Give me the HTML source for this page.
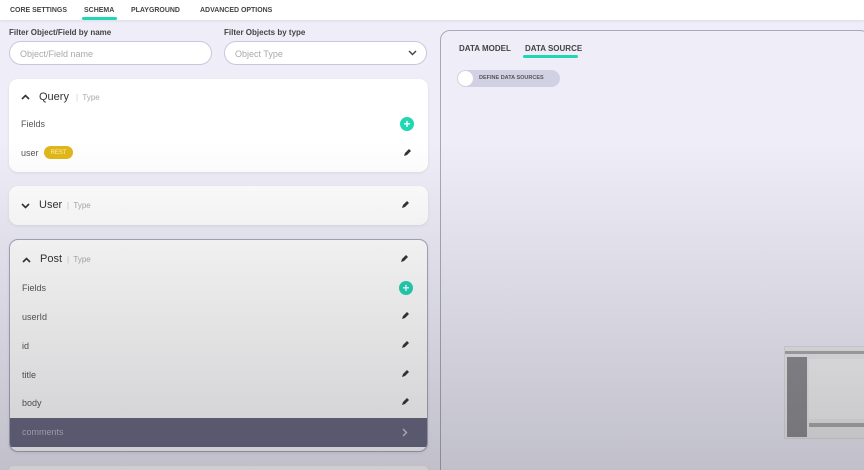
<!DOCTYPE html>
<html style="width:864px;height:470px;overflow:hidden"><head><style>
*{box-sizing:border-box;margin:0;padding:0}
html,body{width:864px;height:470px;overflow:hidden}
body{background:#efeef8;font-family:"Liberation Sans",sans-serif;position:relative;color:#444}
.nav{position:absolute;left:0;top:0;width:864px;height:20px;background:#fff;box-shadow:0 1px 3px rgba(0,0,0,.08)}
.nav span{position:absolute;top:5px;font-size:7.5px;font-weight:bold;color:#444;transform:scaleX(.93);transform-origin:left}
.lbl{position:absolute;font-size:8px;font-weight:bold;color:#444}
.inp{position:absolute;height:24px;border:1px solid #c9c7dd;border-radius:12px;background:#fff;font-size:9px;color:#aaa;padding:7px 10px}
.card{position:absolute;left:9px;width:419px;background:#fff;border-radius:9px;box-shadow:0 1px 3px rgba(0,0,0,.08)}
.t{position:absolute;font-size:9px;color:#555}
.h{position:absolute;font-size:11px;color:#333}
.ty{position:absolute;font-size:8px;color:#aaa}
.pen{position:absolute;width:8px;height:8px}
.plus{position:absolute;width:14px;height:14px;border-radius:50%;background:#1fd6b5;color:#fff;font-size:12px;font-weight:bold;text-align:center;line-height:14px}
.shade{position:absolute;left:0;top:0;width:864px;height:470px;background:linear-gradient(180deg,rgba(0,0,0,0) 0%,rgba(0,0,0,0) 30%,rgba(30,30,40,.22) 100%);pointer-events:none}
</style></head><body>
<div class="nav">
<span style="left:10px">CORE SETTINGS</span>
<span style="left:84px">SCHEMA</span>
<div style="position:absolute;left:82px;top:17px;width:35px;height:3px;background:#1fd6b5;border-radius:2px"></div>
<span style="left:131px">PLAYGROUND</span>
<span style="left:200px">ADVANCED OPTIONS</span>
</div>
<div class="lbl" style="left:9px;top:28px">Filter Object/Field by name</div>
<div class="lbl" style="left:224px;top:28px">Filter Objects by type</div>
<div class="inp" style="left:9px;top:41px;width:203px">Object/Field name</div>
<div class="inp" style="left:224px;top:41px;width:203px">Object Type<svg style="position:absolute;right:9px;top:8px" width="9" height="6" viewBox="0 0 9 6"><path d="M1 1l3.5 3.5L8 1" stroke="#444" stroke-width="1.4" fill="none"/></svg></div>

<div class="card" style="top:79px;height:93px">
<svg style="position:absolute;left:12px;top:15px" width="9" height="6" viewBox="0 0 9 6"><path d="M1 5l3.5-3.5L8 5" stroke="#333" stroke-width="1.6" fill="none"/></svg>
<div class="h" style="left:30px;top:12px">Query</div><div class="ty" style="left:67px;top:14px"><span style="color:#ccc">|</span>&nbsp; Type</div>
<div class="t" style="left:12px;top:40px">Fields</div><div class="plus" style="left:391px;top:38px">+</div>
<div class="t" style="left:12px;top:69px">user</div>
<div style="position:absolute;left:35px;top:67px;width:29px;height:13px;border-radius:7px;background:#e0b71a;color:#fff3b0;font-size:6px;display:flex;align-items:center;justify-content:center">REST</div>
<svg class="pen" style="left:394px;top:70px" viewBox="0 0 8 8"><path d="M1 7l1-3 4-4 2 2-4 4z" fill="#333"/></svg>
</div>

<div class="card" style="top:186px;height:39px">
<svg style="position:absolute;left:12px;top:17px" width="9" height="6" viewBox="0 0 9 6"><path d="M1 1l3.5 3.5L8 1" stroke="#333" stroke-width="1.6" fill="none"/></svg>
<div class="h" style="left:30px;top:13px">User</div><div class="ty" style="left:58px;top:15px"><span style="color:#ccc">|</span>&nbsp; Type</div>
<svg class="pen" style="left:392px;top:15px" viewBox="0 0 8 8"><path d="M1 7l1-3 4-4 2 2-4 4z" fill="#333"/></svg>
</div>

<div class="card" style="top:239px;height:213px;border:1px solid #a9a7bd;overflow:hidden">
<svg style="position:absolute;left:12px;top:17px" width="9" height="6" viewBox="0 0 9 6"><path d="M1 5l3.5-3.5L8 5" stroke="#333" stroke-width="1.6" fill="none"/></svg>
<div class="h" style="left:30px;top:13px">Post</div><div class="ty" style="left:57px;top:15px"><span style="color:#ccc">|</span>&nbsp; Type</div>
<svg class="pen" style="left:390px;top:15px" viewBox="0 0 8 8"><path d="M1 7l1-3 4-4 2 2-4 4z" fill="#333"/></svg>
<div class="t" style="left:12px;top:43px">Fields</div><div class="plus" style="left:389px;top:41px">+</div>
<div class="t" style="left:12px;top:72px">userId</div><svg class="pen" style="left:391px;top:72px" viewBox="0 0 8 8"><path d="M1 7l1-3 4-4 2 2-4 4z" fill="#333"/></svg>
<div class="t" style="left:12px;top:101px">id</div><svg class="pen" style="left:391px;top:101px" viewBox="0 0 8 8"><path d="M1 7l1-3 4-4 2 2-4 4z" fill="#333"/></svg>
<div class="t" style="left:12px;top:130px">title</div><svg class="pen" style="left:391px;top:130px" viewBox="0 0 8 8"><path d="M1 7l1-3 4-4 2 2-4 4z" fill="#333"/></svg>
<div class="t" style="left:12px;top:158px">body</div><svg class="pen" style="left:391px;top:158px" viewBox="0 0 8 8"><path d="M1 7l1-3 4-4 2 2-4 4z" fill="#333"/></svg>
<div style="position:absolute;left:0;top:178px;width:419px;height:29px;background:#67667f"><div class="t" style="left:12px;top:9px;color:#b8b7c8">comments</div><svg style="position:absolute;left:392px;top:10px" width="6" height="9" viewBox="0 0 6 9"><path d="M1 1l3.5 3.5L1 8" stroke="#ccc" stroke-width="1.4" fill="none"/></svg></div>
</div>
<div class="card" style="top:466px;height:4px;border-radius:9px 9px 0 0"></div>

<div style="position:absolute;left:440px;top:30px;width:430px;height:450px;border:1px solid #a9a7bd;border-radius:10px;background:#efeef8">
<span style="position:absolute;left:18px;top:13px;font-size:8px;font-weight:bold;color:#444">DATA MODEL</span>
<span style="position:absolute;left:84px;top:13px;font-size:8px;font-weight:bold;color:#444">DATA SOURCE</span>
<div style="position:absolute;left:82px;top:24px;width:55px;height:3px;background:#1fd6b5;border-radius:2px"></div>
<div style="position:absolute;left:16px;top:39px;width:103px;height:17px;border-radius:9px;background:#d2d1e3"><div style="position:absolute;left:1px;top:1px;width:15px;height:15px;border-radius:50%;background:#fff"></div><span style="position:absolute;left:22px;top:5px;font-size:5.5px;font-weight:bold;color:#555">DEFINE DATA SOURCES</span></div>
</div>
<div style="position:absolute;left:784px;top:346px;width:82px;height:93px;background:#ececec;border:1px solid #ddd">
<div style="position:absolute;left:0;top:4px;width:82px;height:3px;background:#aaa"></div>
<div style="position:absolute;left:2px;top:10px;width:20px;height:80px;background:#8c8c90"></div>
<div style="position:absolute;left:24px;top:12px;width:58px;height:60px;background:#f4f4f4"></div>
<div style="position:absolute;left:24px;top:76px;width:58px;height:4px;background:#aaa"></div>
</div>
<div class="shade"></div>
</body></html>
